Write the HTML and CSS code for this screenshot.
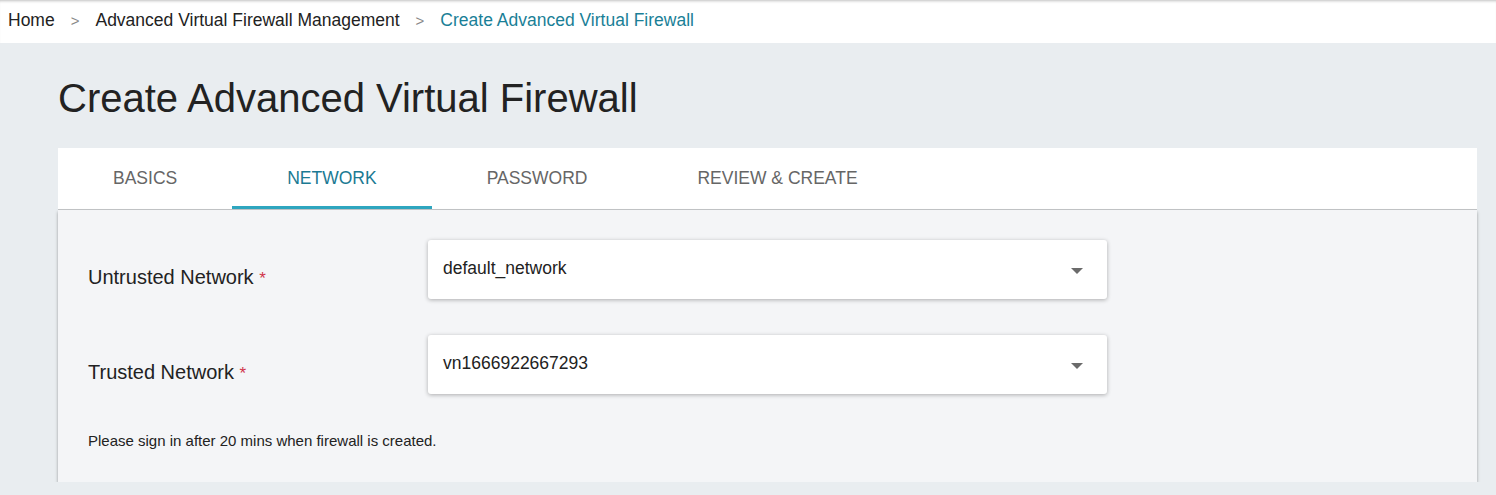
FILE: index.html
```html
<!DOCTYPE html>
<html lang="en">
  <head>
    <meta charset="UTF-8" />
    <meta name="viewport" content="width=device-width, initial-scale=1.0" />
    <title>Create Advanced Virtual Firewall</title>
    <link rel="stylesheet" href="styles.css">
  </head>
  <body>
    <nav class="breadcrumb">
      <a href="#">Home</a>
      <span class="sep">&gt;</span>
      <a href="#">Advanced Virtual Firewall Management</a>
      <span class="sep">&gt;</span>
      <span class="current">Create Advanced Virtual Firewall</span>
    </nav>

    <main class="page">
      <h1>Create Advanced Virtual Firewall</h1>

      <div class="tabs">
        <div class="tab">BASICS</div>
        <div class="tab active">NETWORK</div>
        <div class="tab">PASSWORD</div>
        <div class="tab">REVIEW &amp; CREATE</div>
      </div>

      <section class="panel">
        <div class="field">
          <label>Untrusted Network <span class="req">*</span></label>
          <div class="select">
            <span>default_network</span>
            <span class="caret"></span>
          </div>
        </div>
        <div class="field">
          <label>Trusted Network <span class="req">*</span></label>
          <div class="select">
            <span>vn1666922667293</span>
            <span class="caret"></span>
          </div>
        </div>
        <p class="note">Please sign in after 20 mins when firewall is created.</p>
      </section>
    </main>
  </body>
</html>
```

FILE: styles.css
```css
body {
  margin: 0;
  font-family: "Liberation Sans", Arial, sans-serif;
  background: #e9edf0;
  color: #222;
  overflow: hidden;
}

.breadcrumb {
  height: 43px;
  box-sizing: border-box;
  background: #fff;
  display: flex;
  align-items: center;
  padding: 0 8px 3px;
  font-size: 17.5px;
  box-shadow: inset 0 3px 3px -2px rgba(0, 0, 0, 0.25);
}

.breadcrumb a {
  color: #222;
  text-decoration: none;
}

.breadcrumb .sep {
  color: #888;
  margin: 0 16px 0 16px;
  font-size: 15px;
}

.breadcrumb .current {
  color: #1a7f97;
}

.page {
  padding: 0 19px 0 58px;
}

h1 {
  margin: 0;
  padding: 33px 0 27px;
  font-size: 40px;
  font-weight: normal;
  color: #222;
  line-height: 45px;
}

.tabs {
  display: flex;
  background: #fff;
  height: 61px;
  border-bottom: 1px solid #c4c6c8;
}

.tab {
  padding: 0 55px;
  display: flex;
  align-items: center;
  font-size: 17.5px;
  color: #666;
  border-bottom: 3px solid transparent;
  box-sizing: border-box;
  height: 61px;
  padding-top: 2px;
}

.tab.active {
  color: #1b7a93;
  border-bottom-color: #2ea6bf;
}

.panel {
  background: #f4f5f7;
  height: 272px;
  box-sizing: border-box;
  padding: 30px 30px 0;
  box-shadow: 0 2px 3px rgba(0, 0, 0, 0.35);
}

.field {
  display: flex;
  align-items: center;
  margin-bottom: 36px;
}

.field label {
  width: 340px;
  font-size: 20px;
  color: #222;
  padding-top: 15px;
}

.req {
  color: #d0344a;
  font-size: 17px;
}

.select {
  width: 679px;
  height: 59px;
  background: #fff;
  border-radius: 3px;
  box-shadow: 0 1px 4px rgba(0, 0, 0, 0.3);
  display: flex;
  align-items: center;
  justify-content: space-between;
  padding: 0 24px 0 15px;
  box-sizing: border-box;
  font-size: 17.5px;
  color: #222;
}

.select span:first-child {
  margin-top: -3px;
}

.caret {
  width: 0;
  height: 0;
  border-left: 6px solid transparent;
  border-right: 6px solid transparent;
  border-top: 6px solid #6b6b6b;
  margin-top: 2px;
}

.note {
  margin: 0;
  padding-top: 2px;
  font-size: 15px;
  color: #222;
}
```
